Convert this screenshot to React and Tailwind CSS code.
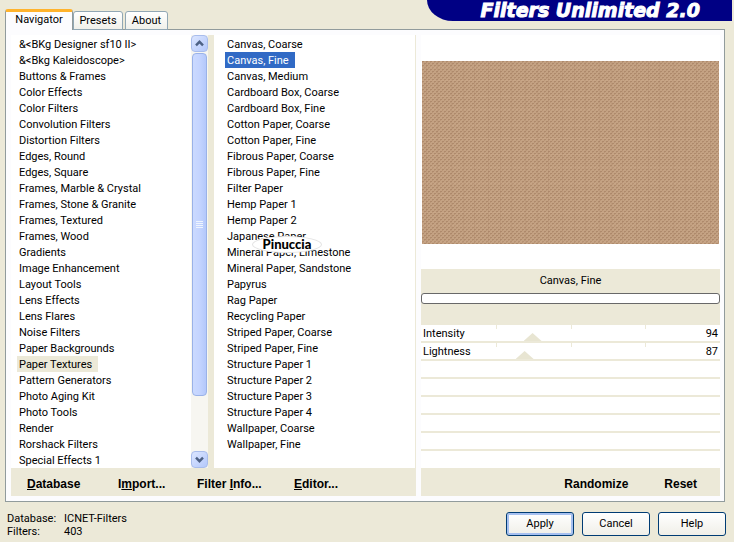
import React, { useState } from "react";

const categories = [
  "&<BKg Designer sf10 II>",
  "&<Bkg Kaleidoscope>",
  "Buttons & Frames",
  "Color Effects",
  "Color Filters",
  "Convolution Filters",
  "Distortion Filters",
  "Edges, Round",
  "Edges, Square",
  "Frames, Marble & Crystal",
  "Frames, Stone & Granite",
  "Frames, Textured",
  "Frames, Wood",
  "Gradients",
  "Image Enhancement",
  "Layout Tools",
  "Lens Effects",
  "Lens Flares",
  "Noise Filters",
  "Paper Backgrounds",
  "Paper Textures",
  "Pattern Generators",
  "Photo Aging Kit",
  "Photo Tools",
  "Render",
  "Rorshack Filters",
  "Special Effects 1",
];

const filters = [
  "Canvas, Coarse",
  "Canvas, Fine",
  "Canvas, Medium",
  "Cardboard Box, Coarse",
  "Cardboard Box, Fine",
  "Cotton Paper, Coarse",
  "Cotton Paper, Fine",
  "Fibrous Paper, Coarse",
  "Fibrous Paper, Fine",
  "Filter Paper",
  "Hemp Paper 1",
  "Hemp Paper 2",
  "Japanese Paper",
  "Mineral Paper, Limestone",
  "Mineral Paper, Sandstone",
  "Papyrus",
  "Rag Paper",
  "Recycling Paper",
  "Striped Paper, Coarse",
  "Striped Paper, Fine",
  "Structure Paper 1",
  "Structure Paper 2",
  "Structure Paper 3",
  "Structure Paper 4",
  "Wallpaper, Coarse",
  "Wallpaper, Fine",
];

const List = ({ items, selected, onSelect, selectedClass }) => (
  <ul className="min-w-0 flex-1 pt-px">
    {items.map((item) => (
      <li key={item} className="flex h-4">
        <button
          onClick={() => onSelect(item)}
          className={`flex h-4 items-start whitespace-nowrap pl-0.5 pr-1.5 leading-[18px] ${item === selected ? selectedClass : ""}`}
        >
          {item}
        </button>
      </li>
    ))}
  </ul>
);

const ScrollButton = ({ label, path }) => (
  <button
    aria-label={label}
    className="flex h-[17px] w-full items-center justify-center rounded-sm border border-[#a9bdec] bg-linear-to-br from-[#dce6ff] to-[#b4c8fb]"
  >
    <svg width="9" height="7" viewBox="0 0 9 7" fill="none" stroke="#4d6185" strokeWidth="2.4">
      <path d={path} />
    </svg>
  </button>
);

const ScrollBar = () => (
  <div className="flex w-[17px] shrink-0 flex-col bg-[#f7f6f1]">
    <ScrollButton label="Scroll up" path="M1 5.3 4.5 1.8 8 5.3" />
    <div className="flex flex-1 flex-col pt-px">
      <div className="mx-px flex h-[343px] flex-col items-center justify-center gap-px rounded-sm border border-[#9ab2e8] bg-linear-to-r from-[#cbdaff] via-[#c4d4ff] to-[#b4c8fb]">
        <span className="h-px w-[7px] bg-[#eef4fe]" />
        <span className="h-px w-[7px] bg-[#eef4fe]" />
        <span className="h-px w-[7px] bg-[#eef4fe]" />
        <span className="h-px w-[7px] bg-[#eef4fe]" />
      </div>
    </div>
    <ScrollButton label="Scroll down" path="M1 1.7 4.5 5.2 8 1.7" />
  </div>
);

const CanvasPreview = () => (
  <svg className="block h-[183px] w-full" role="img" aria-label="Preview">
    <defs>
      <pattern id="weave" width="4" height="4" patternUnits="userSpaceOnUse">
        <rect width="4" height="4" fill="#c4a283" />
        <rect x="0" y="0" width="2" height="1" fill="#ae8a6c" />
        <rect x="2" y="2" width="2" height="1" fill="#ae8a6c" />
        <rect x="0" y="1" width="1" height="1" fill="#b99576" />
        <rect x="2" y="3" width="1" height="1" fill="#b99576" />
      </pattern>
      <pattern id="threads" width="37" height="29" patternUnits="userSpaceOnUse">
        <path d="M4.5 0v29M15.5 0v29M29.5 0v29" stroke="#a27c5f" strokeOpacity="0.18" />
        <path d="M0 6.5h37M0 19.5h37" stroke="#d8b594" strokeOpacity="0.2" />
      </pattern>
    </defs>
    <rect width="100%" height="100%" fill="url(#weave)" />
    <rect width="100%" height="100%" fill="url(#threads)" />
  </svg>
);

const SliderRow = ({ label, value, onChange }) => (
  <div className="grid h-[18px] grid-cols-4 border-b-2 border-[#ece9d8] bg-white">
    <div className="col-span-4 col-start-1 row-start-1 grid h-4 grid-cols-4">
      <span />
      <span className="h-1 border-l border-[#ece9d8]" />
      <span className="h-1 border-l border-[#ece9d8]" />
      <span className="h-1 border-l border-[#ece9d8]" />
    </div>
    <label
      htmlFor={label}
      className="col-span-4 col-start-1 row-start-1 flex h-4 justify-between px-0.5 leading-[18px]"
    >
      <span>{label}</span>
      <span>{value}</span>
    </label>
    <input
      id={label}
      type="range"
      min="0"
      max="255"
      value={value}
      onChange={(e) => onChange(Number(e.target.value))}
      className="col-span-4 col-start-1 row-start-1 -mx-1 h-2 appearance-none self-end bg-transparent [&::-webkit-slider-thumb]:h-2 [&::-webkit-slider-thumb]:w-[18px] [&::-webkit-slider-thumb]:appearance-none [&::-webkit-slider-thumb]:bg-[#e8e5d2] [&::-webkit-slider-thumb]:[clip-path:polygon(50%_0,100%_100%,0_100%)]"
    />
  </div>
);

const dialogButton =
  "h-6 w-[68px] rounded-[3px] border border-[#003c74] bg-linear-to-b from-white to-[#f0efe8]";

const App = () => {
  const [category, setCategory] = useState("Paper Textures");
  const [filter, setFilter] = useState("Canvas, Fine");
  const [intensity, setIntensity] = useState(94);
  const [lightness, setLightness] = useState(87);

  return (
    <div className="min-h-screen bg-[#ece9d8] font-['Roboto',sans-serif] text-[11px] text-black">
      <header className="flex h-[29px] items-start justify-between pl-[5px] pr-0.5">
        <nav className="flex h-[30px] items-end self-start">
          <button className="relative h-[21px] w-[68px] rounded-t-[3px] border-x border-t-[3px] border-x-[#919b9c] border-t-[#ffb32c] bg-[#fcfcfe] pb-0.5">
            Navigator
          </button>
          <button className="h-[19px] w-[50px] rounded-t-[3px] border border-[#91a7b4] bg-linear-to-b from-white to-[#f0f0ea] pt-px">
            Presets
          </button>
          <button className="ml-0.5 h-[19px] w-[43px] rounded-t-[3px] border border-[#91a7b4] bg-linear-to-b from-white to-[#f0f0ea] pt-px">
            About
          </button>
        </nav>
        <h1 className="h-[21px] rounded-bl-[26px_21px] bg-[#000084] pl-[54px] pr-8 font-['DejaVu_Sans',sans-serif] text-[19px] font-bold italic leading-[21px] text-white [-webkit-text-stroke:1px_white]">
          Filters Unlimited 2.0
        </h1>
      </header>

      <main className="ml-[5px] mr-[9px] flex border border-[#919b9c] bg-[#fcfcfe] p-[5px] pr-1">
        <section className="flex min-w-0 flex-[405] flex-col">
          <div className="flex flex-1 border-r border-[#ece9d8] bg-white">
            <div className="flex flex-[191] pl-1.5">
              <List
                items={categories}
                selected={category}
                onSelect={setCategory}
                selectedClass="bg-[#ece9d8]"
              />
              <ScrollBar />
            </div>
            <div className="relative flex flex-[190] border-l-[6px] border-[#ece9d8] pl-[11px]">
              <List
                items={filters}
                selected={filter}
                onSelect={setFilter}
                selectedClass="bg-[#316ac5] text-white"
              />
              <div className="absolute left-[38px] top-[201px] flex h-[17px] w-[70px] items-center justify-center rounded-[50%] border border-[#e4e4e4] bg-white font-['Lato',sans-serif] text-[13px] font-black">
                Pinuccia
              </div>
            </div>
          </div>
          <div className="flex h-7 items-center bg-[#ece9d8] pl-4 pt-1 font-['Liberation_Sans',sans-serif] text-xs font-bold">
            <button className="w-[91px] text-left"><u>D</u>atabase</button>
            <button className="w-[79px] text-left">I<u>m</u>port...</button>
            <button className="w-[97px] text-left">Filter <u>I</u>nfo...</button>
            <button className="text-left"><u>E</u>ditor...</button>
          </div>
        </section>

        <section className="ml-[5px] flex min-w-0 flex-[299] flex-col">
          <div className="bg-white px-px pb-[25px] pt-[26px]">
            <CanvasPreview />
          </div>
          <div className="h-14 bg-[#ece9d8]">
            <p className="h-6 text-center leading-6">{filter}</p>
            <div className="h-[11px] rounded-[3px] border border-[#686868] bg-white" />
          </div>
          <SliderRow label="Intensity" value={intensity} onChange={setIntensity} />
          <SliderRow label="Lightness" value={lightness} onChange={setLightness} />
          <div className="h-[18px] border-b-2 border-[#ece9d8] bg-white" />
          <div className="h-[18px] border-b-2 border-[#ece9d8] bg-white" />
          <div className="h-[18px] border-b-2 border-[#ece9d8] bg-white" />
          <div className="h-[18px] border-b-2 border-[#ece9d8] bg-white" />
          <div className="h-[18px] border-b-2 border-[#ece9d8] bg-white" />
          <div className="flex-1 bg-white" />
          <div className="flex h-7 items-center justify-end gap-9 bg-[#ece9d8] pr-[23px] pt-1 font-['Liberation_Sans',sans-serif] text-xs font-bold">
            <button>Randomize</button>
            <button>Reset</button>
          </div>
        </section>
      </main>

      <footer className="flex items-start justify-between pl-[7px] pr-2 pt-2.5">
        <dl className="grid grid-cols-[57px_auto] leading-[13px]">
          <dt>Database:</dt>
          <dd>ICNET-Filters</dd>
          <dt>Filters:</dt>
          <dd>403</dd>
        </dl>
        <div className="flex gap-2">
          <button className={`${dialogButton} shadow-[inset_0_0_0_2px_#a6c0f0]`}>Apply</button>
          <button className={dialogButton}>Cancel</button>
          <button className={dialogButton}>Help</button>
        </div>
      </footer>
    </div>
  );
};

export default App;
